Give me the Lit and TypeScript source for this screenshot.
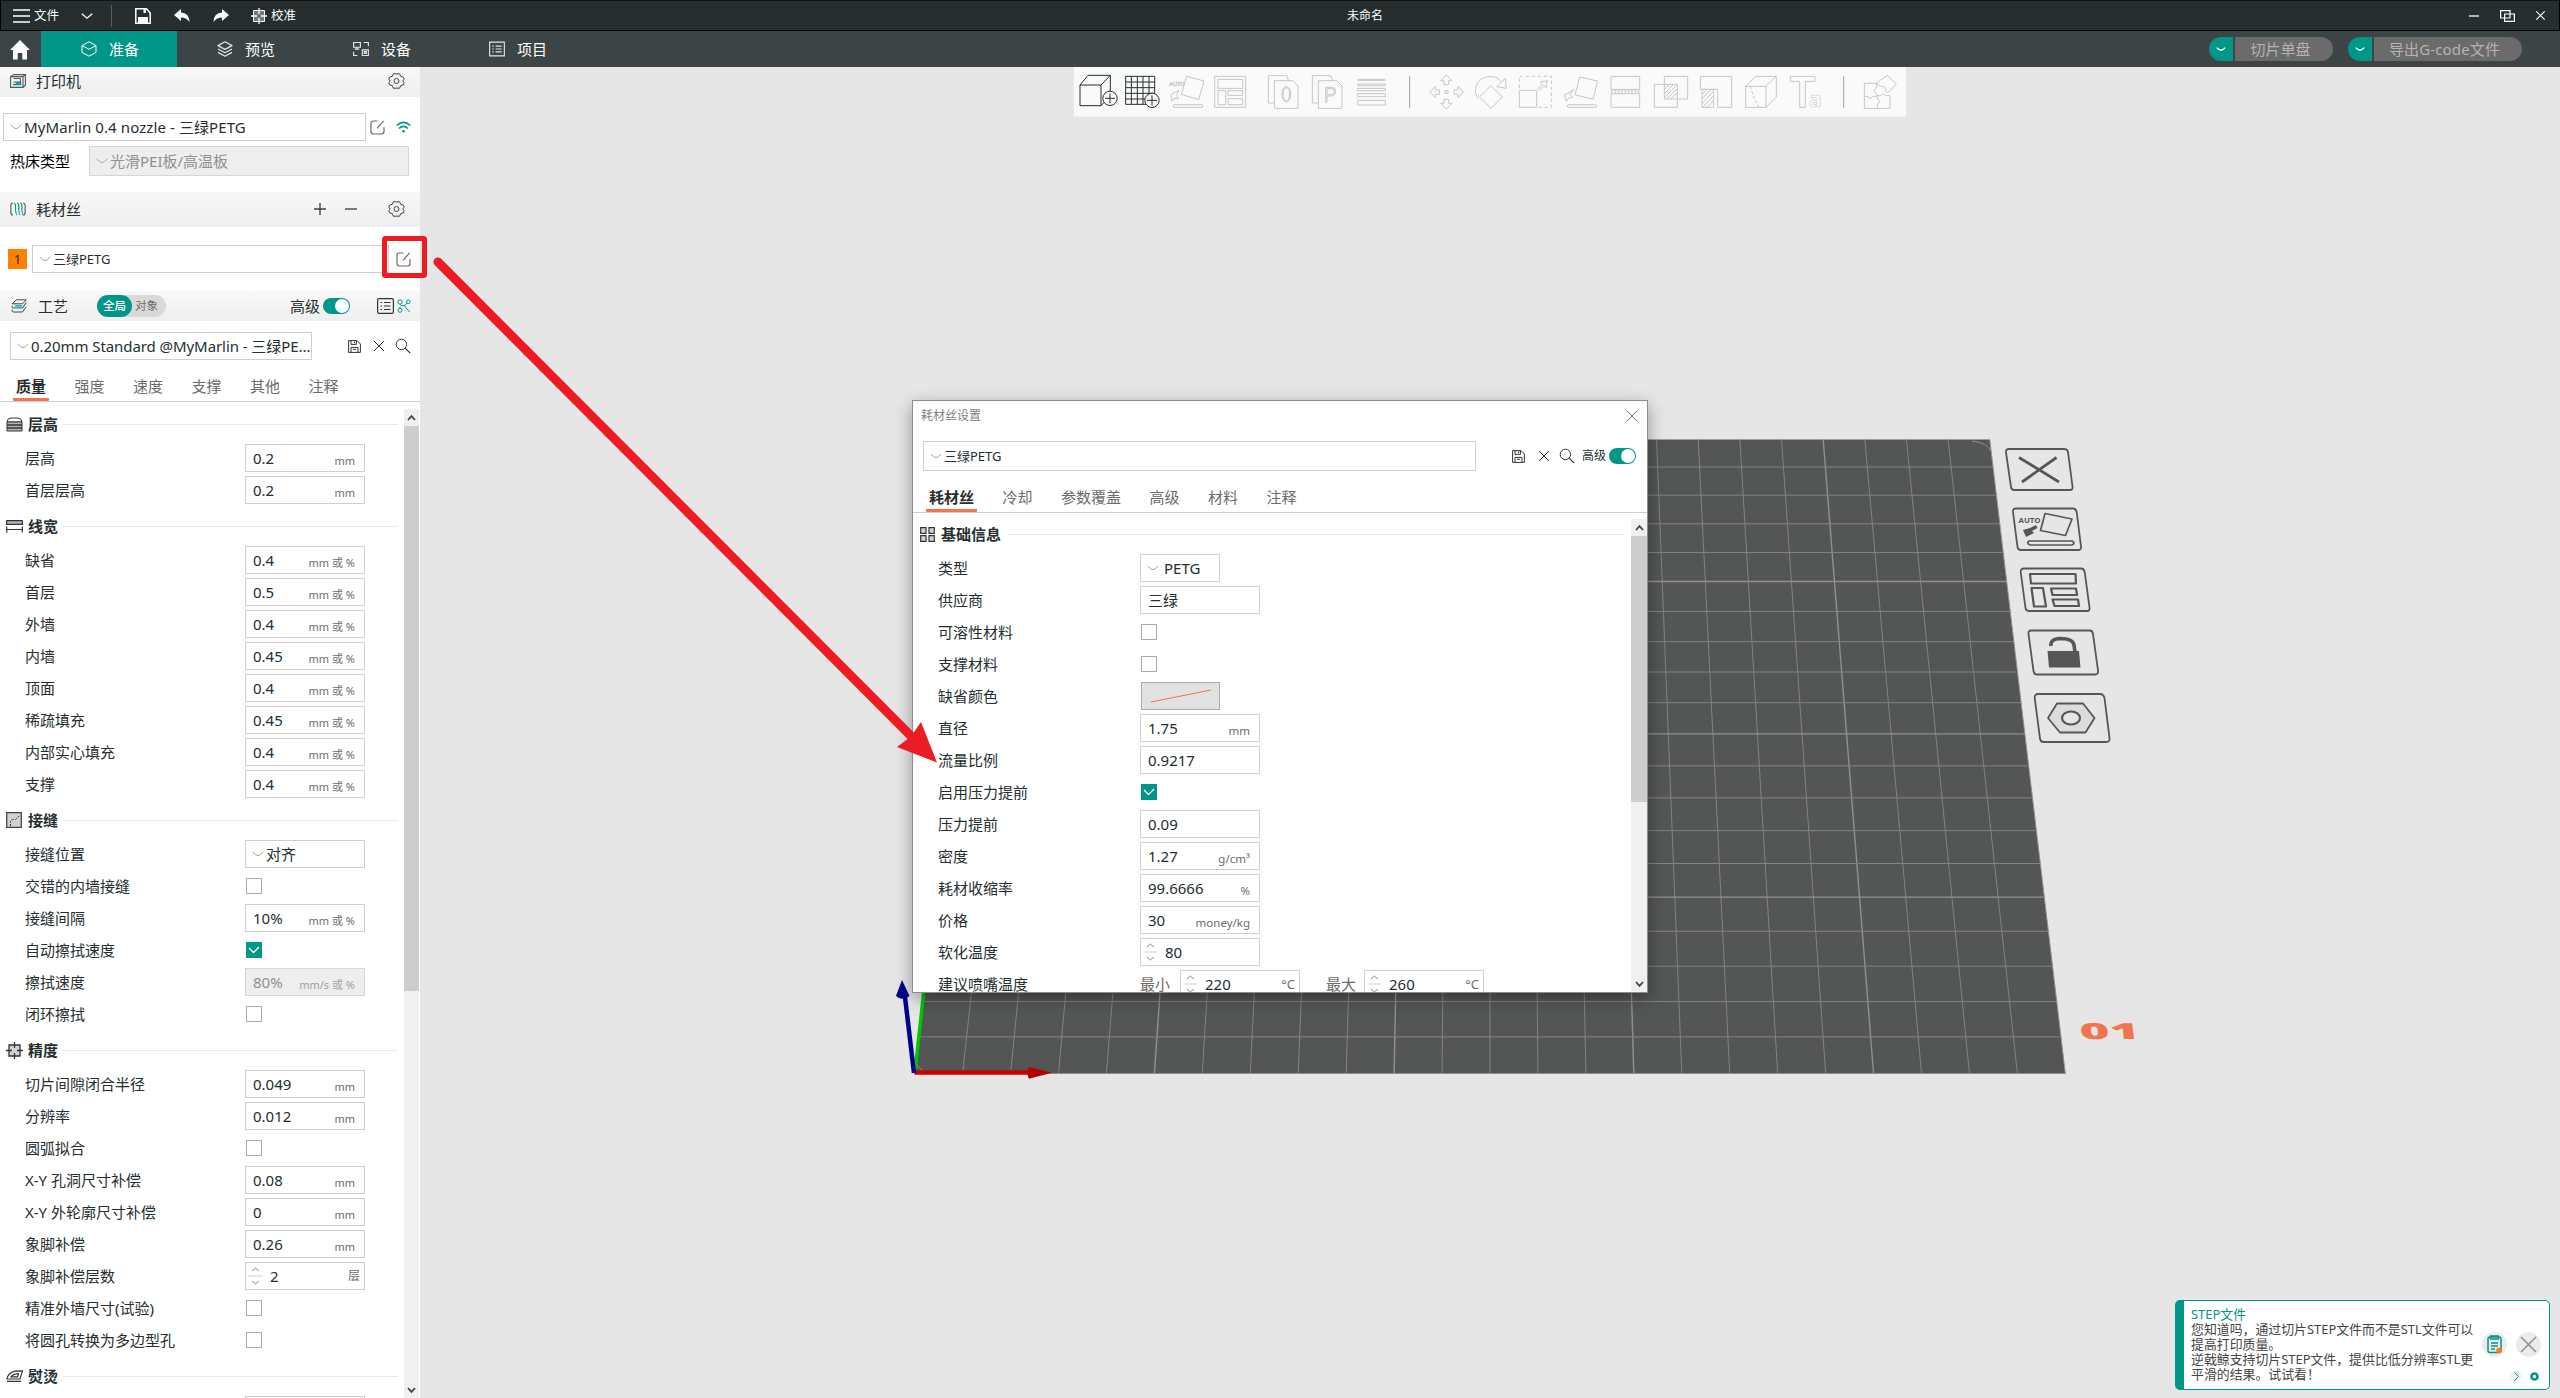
import { LitElement, html, css, svg, nothing, type TemplateResult } from "lit";
import { customElement } from "lit/decorators.js";
import { classMap } from "lit/directives/class-map.js";

type Kind = "text" | "select" | "check" | "spin" | "color" | "range";
interface Row {
  label: string;
  kind?: Kind;
  value?: string;
  unit?: string;
  on?: boolean;
  disabled?: boolean;
  short?: boolean;
}
interface Section {
  title: string;
  icon: string;
  rows: Row[];
}

const W = "mm 或 %";

const PROCESS: Section[] = [
  { title: "层高", icon: "layers", rows: [
    { label: "层高", value: "0.2", unit: "mm" },
    { label: "首层层高", value: "0.2", unit: "mm" },
  ] },
  { title: "线宽", icon: "width", rows: [
    { label: "缺省", value: "0.4", unit: W },
    { label: "首层", value: "0.5", unit: W },
    { label: "外墙", value: "0.4", unit: W },
    { label: "内墙", value: "0.45", unit: W },
    { label: "顶面", value: "0.4", unit: W },
    { label: "稀疏填充", value: "0.45", unit: W },
    { label: "内部实心填充", value: "0.4", unit: W },
    { label: "支撑", value: "0.4", unit: W },
  ] },
  { title: "接缝", icon: "seam", rows: [
    { label: "接缝位置", kind: "select", value: "对齐" },
    { label: "交错的内墙接缝", kind: "check" },
    { label: "接缝间隔", value: "10%", unit: W },
    { label: "自动擦拭速度", kind: "check", on: true },
    { label: "擦拭速度", value: "80%", unit: "mm/s 或 %", disabled: true },
    { label: "闭环擦拭", kind: "check" },
  ] },
  { title: "精度", icon: "target", rows: [
    { label: "切片间隙闭合半径", value: "0.049", unit: "mm" },
    { label: "分辨率", value: "0.012", unit: "mm" },
    { label: "圆弧拟合", kind: "check" },
    { label: "X-Y 孔洞尺寸补偿", value: "0.08", unit: "mm" },
    { label: "X-Y 外轮廓尺寸补偿", value: "0", unit: "mm" },
    { label: "象脚补偿", value: "0.26", unit: "mm" },
    { label: "象脚补偿层数", kind: "spin", value: "2", unit: "层" },
    { label: "精准外墙尺寸(试验)", kind: "check" },
    { label: "将圆孔转换为多边型孔", kind: "check" },
  ] },
  { title: "熨烫", icon: "iron", rows: [{ label: "", value: "", kind: "text" }] },
];

const FILAMENT: Section[] = [
  { title: "基础信息", icon: "grid", rows: [
    { label: "类型", kind: "select", value: "PETG", short: true },
    { label: "供应商", value: "三绿" },
    { label: "可溶性材料", kind: "check" },
    { label: "支撑材料", kind: "check" },
    { label: "缺省颜色", kind: "color" },
    { label: "直径", value: "1.75", unit: "mm" },
    { label: "流量比例", value: "0.9217" },
    { label: "启用压力提前", kind: "check", on: true },
    { label: "压力提前", value: "0.09" },
    { label: "密度", value: "1.27", unit: "g/cm³" },
    { label: "耗材收缩率", value: "99.6666", unit: "%" },
    { label: "价格", value: "30", unit: "money/kg" },
    { label: "软化温度", kind: "spin", value: "80" },
    { label: "建议喷嘴温度", kind: "range" },
  ] },
];

/* ---------- icons ---------- */
const ic = (w: number, h: number, body: unknown, cls = "", vb = `0 0 ${w} ${h}`) =>
  html`<svg class="ic ${cls}" width=${w} height=${h} viewBox=${vb}>${body}</svg>`;

const chevron = ic(12, 6, svg`<path d="M.8 .8 Q3.5 4.6 6 4.6 T11.2 .8" stroke="#a6a6a6"/>`, "chev");
const saveIcon = ic(13, 13, svg`<path d="M.6 .6H9L12.4 4V12.4H.6ZM3 .6V4.4H8.4V.6M3 12.4V7.4H10V12.4M4.8 9.3H8.2M6.6 1.5V3.2" stroke="#333"/>`);
const crossIcon = ic(12, 12, svg`<path d="M1 1L11 11M11 1L1 11" stroke="#333"/>`);
const searchIcon = ic(16, 16, svg`<circle cx="6.4" cy="6.4" r="5.2" stroke="#333"/><path d="M10.2 10.2L15.2 15.2" stroke="#333" stroke-width="1.2"/>`, "search");
const editIcon = ic(15, 15, svg`<path d="M7.5 1H3.2Q1 1 1 3.2V11.6Q1 14 3.2 14H11.6Q14 14 14 11.6V7.2M7.2 8.3L13.6 .8" stroke="#6b6b6b" stroke-width="1.2"/>`);
const gearIcon = ic(17, 16, svg`<path d="M5.3 .8H11.7L12.6 3.3L15.2 4L16.2 6.2L14.8 8L16.2 9.8L15.2 12L12.6 12.7L11.7 15.2H5.3L4.4 12.7L1.8 12L.8 9.8L2.2 8L.8 6.2L1.8 4L4.4 3.3Z" stroke="#444" stroke-linejoin="round"/><circle cx="8.5" cy="8" r="2.5" stroke="#444"/>`);

const sectionIcon = (n: string) => {
  switch (n) {
    case "layers":
      return ic(17, 15, svg`<path d="M1 5Q1.4 1 5 1H12Q15.6 1 16 5Z" fill="#fff" stroke="#333"/><path d="M1 5H16V8H1ZM1 8H16V11H1ZM1 11H16V14H1Z" fill="#b5b5b5" stroke="#333"/>`);
    case "width":
      return ic(17, 13, svg`<path d="M.7 .7H16.3V4.3H.7Z" fill="#b5b5b5" stroke="#333" stroke-width="1.2"/><path d="M.7 6.5V12.5M16.3 6.5V12.5M.7 9.5H16.3" stroke="#333" stroke-width="1.2"/>`);
    case "seam":
      return ic(16, 16, svg`<path d="M.7 .7H15.3V15.3H.7Z" fill="#d2d2d2" stroke="#444" stroke-width="1.3"/><path d="M4.5 14V9.5Q5 7.5 7.5 7.5H9.5L14 3" stroke="#333" stroke-dasharray="2 1.3"/>`);
    case "target":
      return ic(17, 17, svg`<path d="M3 3H14V14H3Z" fill="#d2d2d2" stroke="#333" stroke-width="1.3"/><path d="M8.5 0V6M8.5 11V17M0 8.5H6M11 8.5H17" stroke="#333" stroke-width="1.3"/>`);
    case "iron":
      return ic(17, 12, svg`<path d="M1 9Q2 3 9 1.2L16.5 .8L14 9Z" fill="#fff" stroke="#333" stroke-width="1.2"/><path d="M5 6.8Q6.5 4 12.5 3.6L11.6 6.8ZM1 11.3H15" stroke="#333" stroke-width="1.2"/>`);
    default:
      return ic(15, 15, svg`<path d="M.7 .7H6V6.3H.7ZM9 .7H14.3V6.3H9ZM.7 8.7H6V14.3H.7ZM9 8.7H14.3V14.3H9Z" fill="#d2d2d2" stroke="#333" stroke-width="1.2"/>`);
  }
};

/* Toolbar glyphs: [first unit, last unit, tone, drawing]; three units to a pixel. */
const plus = (x: number, y: number) => svg`<circle cx=${x} cy=${y} r="21.5" fill="#fafafa"/><path d=${`M${x - 15} ${y}H${x + 15}M${x} ${y - 15}V${y + 15}`}/>`;
const TOOLS: [number, number, string, unknown][] = [
  [12, 153, "dark", svg`<path d="M30 63L54 34H121L93 63ZM30 63V125H93V63M121 34V96L93 125"/>${plus(120, 103)}`],
  [153, 282, "dark", svg`<path d="M167 37H254V121H167ZM184 37V121M202 37V121M219 37V121M237 37V121M167 54H254M167 71H254M167 88H254M167 105H254"/>${plus(246, 109)}`],
  [282, 417, "dim", svg`<path d="M350 37L402 51L386 107L334 91ZM312 122H396Q402 126 396 130H312Q306 126 312 122ZM326 79L303 92L306 112L312 103L326 105L319 95Z"/><text x="298" y="66" font-size="17">AUTO</text>`],
  [417, 561, "dim", svg`<path d="M434 37H527V130H434ZM444 46H518V73H444ZM444 80H467V122H444ZM474 80H518V94H474ZM474 104H518V122H474Z"/>`],
  [561, 705, "dim", svg`<path d="M613 117H595V35H650L655 48M613 50H668L684 66V133H613Z"/><ellipse cx="649" cy="91" rx="13" ry="23"/><ellipse cx="649" cy="91" rx="10" ry="20"/>`],
  [705, 846, "dim", svg`<path d="M745 117H727V35H782L787 48M745 50H800L816 66V133H745ZM767 115V70H785Q797 70 797 82T785 96H771V115ZM771 74V92H784Q793 92 793 82T784 74Z"/>`],
  [846, 975, "dim", svg`<path d="M863 46H946M863 49H946M863 60H946V65H863ZM863 73H946V80H863ZM863 89H946V98H863ZM863 109H946V123H863Z"/>`],
  [975, 1065, "sep", svg`<path d="M1019 37V131"/>`],
  [-15, 120, "dim", svg`<path d="M49 33L66 50H56V62H42V50H32ZM49 135L32 118H42V106H56V118H66ZM-1 84L16 67V78H28V91H16V101ZM101 84L84 67V78H72V91H84V101ZM45 80H54V89H45Z"/>`],
  [120, 252, "dim", svg`<path d="M183 65L217 99L183 133L148 99ZM143 103Q132 86 138 67Q146 42 174 38Q200 35 212 52M200 68L226 43L229 73Z"/>`],
  [252, 390, "dim", svg`<path d="M268 79H320V130H268Z"/><path d="M268 72V37H364V130H326" stroke-dasharray="10 8"/><path d="M324 74L338 60L331 54L352 50L348 71L342 65L329 78Z"/>`],
  [390, 525, "dim", svg`<path d="M449 39L503 51L489 105L435 93ZM414 122H498Q504 126 498 130H414Q408 126 414 122ZM431 77L403 94L409 113L415 103L428 99L419 92Z"/>`],
  [525, 660, "dim", svg`<path d="M543 76V37H629V76ZM543 89H629V130H543Z"/><path d="M543 80H629M543 84H629" stroke-dasharray="6 4"/>`],
  [660, 795, "dim", svg`<path d="M673 61H742V130H673ZM703 37H773V105H703Z"/><path d="M705 75L717 63M705 87L729 63M705 99L740 64M710 104L741 75M722 104L741 87"/>`],
  [795, 930, "dim", svg`<path d="M811 76V37H905V130H863V76ZM816 76H851V130H816Z"/><path d="M817 90L829 77M817 104L841 77M817 118L850 82M820 128L850 96M833 129L850 110"/>`],
  [930, 1065, "dim", svg`<path d="M947 67L977 37H1039L1008 67ZM947 67V130H1008V67M1039 37V99L1008 130"/><path d="M961 67L972 102L986 130" stroke-dasharray="9 6"/>`],
  [1065, 1200, "dim", svg`<path d="M1081 37H1155V52H1126V130H1109V52H1081Z"/><text x="1137" y="129" font-size="64" font-weight="700">a</text>`],
  [1200, 1275, "sep", svg`<path d="M1241 37V131"/>`],
  [1275, 1428, "dim", svg`<path d="M1303 58H1340V72Q1326 80 1340 90V97H1328Q1319 108 1314 97H1303ZM1303 97V133H1342V121Q1356 113 1342 105V97M1342 133H1380V95H1366Q1360 84 1353 95H1342M1345 54L1352 48L1372 34L1399 61L1373 87L1366 80Q1368 65 1352 68L1343 60Q1334 66 1345 54"/>`],
];

/* ---------- build plate geometry ---------- */
const FAR = -3753, MID = 1490, NEAR = 1073, BACK = 439.5;
const along = (k: number, y: number) => MID + (k - 12) * 47.94 * ((y - FAR) / (NEAR - FAR));
const ROWS = [88, 155, 223, 291, 360, 431, 503, 575, 648, 722, 798, 874, 952, 1030, 1110, 1191, 1274, 1358, 1442].map((v) => 430 + v / 2.376);

const scene = svg`
  <polygon points=${`${along(0, BACK)},${BACK} ${along(24, BACK)},${BACK} ${along(24, NEAR)},${NEAR} ${along(0, NEAR)},${NEAR}`} fill="#545655"/>
  ${Array.from({ length: 23 }, (_, i) => i + 1).map((k) => svg`<line x1=${along(k, BACK)} y1=${BACK} x2=${along(k, NEAR)} y2=${NEAR} stroke=${k % 5 ? "#828483" : "#8f9190"} stroke-width=${k % 5 ? 1 : 1.4}/>`)}
  ${ROWS.map((y, i) => svg`<line x1=${along(0, y)} y1=${y} x2=${along(24, y)} y2=${y} stroke=${(i + 1) % 5 ? "#828483" : "#8f9190"} stroke-width=${(i + 1) % 5 ? 1 : 1.4}/>`)}
  <path d="M1972 441Q1988 443 1991 451M916 1062Q917 1068 926 1072M915 1073.5H2066" stroke="#8f908f" fill="none"/>
  <path d=${`M${along(24, BACK)} ${BACK}L${along(24, NEAR)} ${NEAR}`} stroke="#8f908f"/>
  <g fill="none" stroke="#555756" stroke-width="1.8" stroke-linejoin="round">
    <path d="M2009 449H2064Q2067.500 449 2068 452L2072.500 486.500Q2073 490 2070 490H2014.500Q2011.500 490 2011 487L2006 452.500Q2005.500 449 2009 449Z"/>
    <path d="M2016 508.500H2073Q2076 508.500 2076.700 512L2081 546.500Q2081.500 550 2078 550H2021Q2018 550 2017.500 547L2013 512Q2012.500 508.500 2016 508.500Z"/>
    <path d="M2024 568.500H2081Q2084 568.500 2084.700 572L2089.500 607.500Q2090 611 2087 611H2029Q2026 611 2025.500 608L2020.700 572Q2020.500 568.500 2024 568.500Z"/>
    <path d="M2031.500 630.500H2090Q2092.500 630.500 2093 634L2098 670.500Q2098.500 674.500 2095 674.500H2037Q2034 674.500 2033.500 671L2028.500 634Q2028 630.500 2031.500 630.500Z"/>
    <path d="M2038 694H2100Q2103.500 694 2104.500 698L2109.500 738Q2110 742 2106 742H2043.500Q2040.500 742 2040 738.500L2034.700 698Q2034.500 694 2038 694Z"/>
    <path d="M2019 457.500L2059 482M2056.500 457.500L2022 482" stroke-width="2.800"/>
    <path d="M2045 513.500L2072 519L2065.500 535.500L2040.500 530.500ZM2029 541H2072Q2076 543 2072 545H2030Q2026 543 2029 541Z" stroke-width="1.700"/>
    <path d="M2030 574H2075.500L2076 583.500H2031ZM2031.500 588H2043L2046 606.500H2034ZM2051 588.500H2076L2077 595H2052.500ZM2052.500 599.500H2078L2079 606H2054.500Z" stroke-width="2.200"/>
    <path d="M2051 646Q2050 639 2060 638.500Q2073 638.500 2074 645L2075 652" stroke-width="3.600"/>
    <path d="M2057 703.500H2083L2094.500 718L2085.500 732.500H2060L2048 718Z" fill="#dcdcdc"/>
    <ellipse cx="2071" cy="718" rx="9" ry="6.500" fill="#e6e6e6" stroke-width="2.200"/>
  </g>
  <path d="M2047.500 651H2079L2080.500 667.500H2049Z M2023 530L2030 528L2036 525L2037.500 528L2032 531L2034 533L2026 537Z" fill="#555756"/>
  <text class="auto" x="2018.500" y="522.500" font-size="7" textLength="22" lengthAdjust="spacingAndGlyphs">AUTO</text>
  <text class="plate" transform="translate(2080.500 1038.700) skewX(7) scale(2.330 1)" font-size="22">01</text>
  <path d="M915 1072L924.500 985" stroke="#00c800" stroke-width="3.500"/>
  <path d="M914.500 1072.500H1030" stroke="#c80000" stroke-width="4.500"/>
  <path d="M1029 1067Q1026 1073 1029 1078.700L1052 1072.800Z" fill="#b40000"/>
  <path d="M914 1073L905 997" stroke="#00008b" stroke-width="4.500"/>
  <path d="M902 980L896 996Q902 1002 909.500 996Z" fill="#00008b"/>`;

@customElement("app-root")
export class AppRoot extends LitElement {
  static styles = css`
    :host { display: block; width: 2560px; height: 1398px; position: relative; overflow: hidden;
      font: 15px/20px "Noto Sans", "Noto Sans CJK SC", sans-serif; color: #262e30; background: #e6e6e6; }
    * { box-sizing: border-box; }
    .ic { display: block; flex: none; fill: none; overflow: visible; }
    .grow { flex: 1; }
    .page { display: flex; flex-direction: column; height: 100%; }

    .titlebar { display: grid; grid-template-columns: 1fr auto 1fr; align-items: center; height: 31px; background: #262e30;
      border: 1px solid #000; border-top-color: #111; color: #fff; font-size: 12.500px; }
    .tl { display: flex; align-items: center; padding-left: 12px; }
    .tl > .vline { width: 1px; height: 22px; background: #566063; margin: 0 23px 0 18px; }
    .name { font-size: 12px; padding-left: 170px; }
    .tr { display: flex; align-items: center; justify-content: flex-end; padding-right: 14px; }

    .nav { display: flex; height: 36px; background: #3c4446; color: #fff; align-items: stretch; }
    .home { width: 41px; display: flex; align-items: center; padding: 2px 0 0 10px; }
    .navtab { width: 136px; display: flex; align-items: center; gap: 12px; padding: 0 0 0 40px; }
    .navtab .ic { width: 16px; }
    .navtab.on { background: #009688; }
    .split { display: flex; align-items: center; gap: 2px; margin-right: 15px; }
    .split .drop { width: 24px; height: 24px; border-radius: 12px 0 0 12px; background: #009688; display: grid; place-items: center; }
    .split .act { height: 24px; border-radius: 0 12px 12px 0; background: #6b6b6b; color: #b4b4b4; line-height: 24px; text-align: center; padding-right: 7px; }
    .act.a { width: 98px; }
    .act.b { width: 148px; letter-spacing: .15px; }
    .split.last { margin-right: 38px; }

    .body { display: flex; flex: 1; min-height: 0; }
    .side { width: 420px; background: #fff; display: flex; flex-direction: column; overflow: hidden; }
    .head { display: flex; align-items: center; background: linear-gradient(#f8f8f8, #efefef); padding: 0 15px 0 10px; flex: none; }
    .h1 { height: 30px; padding-bottom: 2px; }
    .h2 { height: 35px; padding-bottom: 1px; }
    .h3 { height: 30px; padding: 0 9px 0 11px; }
    .head .t { margin-left: 10px; }
    .box { display: flex; align-items: center; flex: none; border: 1px solid #cecece; background: #fff; height: 28px; padding: 0 6px; white-space: nowrap; overflow: hidden; }
    .box.off { background: #eee; color: #909090; border-color: #d6d6d6; }
    .box .chev { margin-right: 2px; }
    .printer { display: flex; align-items: center; padding: 16px 9px 5px 3px; }
    .printer .box { width: 363px; margin-right: 4px; letter-spacing: .1px; }
    .bed { display: flex; align-items: center; height: 30px; padding: 0 11px 0 10px; margin-bottom: 16px; color: #000; }
    .bed .box { width: 320px; height: 30px; margin-left: auto; }
    .fila { display: flex; align-items: center; padding: 18px 9px 18px 8px; font-size: 13px; }
    .fila .n { width: 20px; height: 20px; background: #ff8000; text-align: center; margin-right: 5px; color: #262e30; }
    .fila .box { width: 357px; margin-right: 7px; }
    .pill { display: flex; width: 69px; height: 22px; border-radius: 11px; background: #d9d9d9; font-size: 11.500px; line-height: 22px; color: #6b6b6b; margin-left: 29px; }
    .pill b { width: 35px; border-radius: 11px; background: #009688; color: #fff; text-align: center; margin-right: 3px; font-weight: 500; }
    .switch { width: 27px; height: 16px; flex: none; border-radius: 8px; background: #009688; display: flex; justify-content: flex-end; padding: 1px; margin-left: 3px; }
    .switch i { width: 14px; height: 14px; border-radius: 7px; background: #fff; }
    .tree { stroke: #009688; }
    .preset { display: flex; align-items: center; padding: 11px 9px 0 10px; }
    .preset .box { width: 302px; padding-right: 0; margin-right: 36px; letter-spacing: -.07px; }
    .preset > .ic + .ic { margin-left: 12px; }
    .preset > .ic + .search { margin-left: 10px; }
    .tabs { display: flex; height: 42px; border-bottom: 1px solid #cecece; padding: 0 0 0 13px; gap: 22.500px; flex: none; color: #6b6b6b; }
    .tab { padding: 16px 3px 0; height: 41px; }
    .tab.on { font-weight: 700; color: #262e30; border-bottom: 3px solid #f2754e; border-radius: 1px; }
    .scroll { display: flex; flex: 1; min-height: 0; overflow: hidden; }
    .list { flex: 1; min-width: 0; overflow: hidden; padding-top: 2px; }
    .bar { background: #f0f0f0; display: flex; flex-direction: column; flex: none; }
    .side .bar { width: 15px; margin: 7px 1px 0 0; }
    .cap { height: 17px; display: grid; place-items: center; }
    .thumb { background: #cdcdcd; }
    .side .thumb { height: 565px; }

    .sect { display: flex; align-items: center; height: 38px; padding: 2px 6px 0; gap: 5px; }
    .sect .si { width: 17px; flex: none; }
    .sect b { font-weight: 700; }
    .sect hr { flex: 1; border: 0; border-top: 1px solid #e8e8e8; margin: 0; }
    .row { display: flex; align-items: center; height: 32px; padding-left: 25px; white-space: nowrap; }
    .row .lab { width: 220px; flex: none; position: relative; top: -.5px; }
    .fld { width: 120px; padding: 0 9px 0 7px; }
    .fld.sel { padding-left: 6px; }
    .fld .u { margin-left: auto; font-size: 11px; color: #6b6b6b; position: relative; top: 2.500px; }
    .dialog .fld .u { font-size: 11.500px; }
    .fld.off .u { color: #a0a0a0; }
    .fld.spin { padding: 0 4px 0 2px; }
    .fld.spin .ic { margin-right: 7px; }
    .fld.spin .u { font-size: 12px; top: 0; }
    .dialog .fld.spin .u { font-size: 13px; }
    .fld.short { width: 80px; }
    .fld.short .chev { margin-right: 5px; }
    .check { width: 16px; height: 16px; border: 1px solid #ababab; margin-left: 1px; display: grid; place-items: center; }
    .check.on { background: #009688; border-color: #009688; }
    .color { width: 79px; height: 28px; border: 1px solid #ababab; background: #e1e1e1; margin-left: 1px; display: grid; place-items: center; }
    .mm { color: #6b6b6b; width: 40px; }
    .mm.two { margin-left: 26px; width: 38px; }

    .view { flex: 1; position: relative; overflow: hidden; background: #e6e6e6; }
    .scene { position: absolute; inset: 0; width: 2140px; height: 1331px; }
    .plate { fill: #f2754e; font-family: "Open Sans", sans-serif; font-weight: 800; }
    .auto { fill: #555756; font-family: "Open Sans", sans-serif; font-weight: 700; }
    .tools { position: absolute; left: 654px; top: 0; display: flex; background: #fafafa; height: 50px; border: solid #efefef; border-width: 0 0 1px; }
    .tools svg { stroke-width: 3; }
    .tools .dark { stroke: #262e30; }
    .tools .dim { stroke: #c6c6c6; }
    .tools .sep { stroke: #a0a0a0; }
    .tools text { font-family: "Noto Sans", sans-serif; stroke-width: 1.500; }

    .dialog { position: absolute; left: 492px; top: 333px; width: 736px; height: 593px; background: #fff; border: 1px solid #8c8c8c;
      box-shadow: 0 5px 16px rgba(0,0,0,.36); display: flex; flex-direction: column; overflow: hidden; }
    .dt { display: flex; align-items: center; justify-content: space-between; height: 30px; padding: 0 9px 0 8px; font-size: 12px; color: #808080; }
    .dp { display: flex; align-items: center; height: 30px; margin-top: 10px; padding: 0 10px; font-size: 13px; white-space: nowrap; }
    .dp .box { width: 553px; height: 30px; margin-right: 36px; }
    .dp > .ic + .ic { margin-left: 13px; }
    .dp > .ic + .search { margin-left: 9px; }
    .dp .adv { font-size: 12px; margin-left: 7px; }
    .dialog .tabs { padding-left: 13px; gap: 22.500px; }
    .dialog .list { padding-top: 1px; }
    .dialog .sect { padding-left: 7px; padding-right: 7px; gap: 4px; }
    .dialog .sect hr { margin-left: 4px; }
    .dialog .row .lab { width: 202px; }
    .dialog .bar { width: 16px; margin-top: 6px; }
    .dialog .thumb { height: 266px; }

    .toast { position: absolute; left: 1755px; top: 1233px; width: 375px; height: 90px; background: #fff; border: 1px solid #009688; border-left-width: 9px;
      border-radius: 5px; display: flex; font-size: 12.900px; line-height: 15px; padding: 6px 8px 0 7px; color: #444; }
    .toast p { margin: 0; width: 292px; white-space: nowrap; }
    .toast p span { display: block; }
    .toast .ttl { color: #009688; }
    .ta { display: flex; flex-direction: column; padding-top: 25px; gap: 15px; }
    .ta div { display: flex; align-items: center; gap: 9px; }
    .ta .sm { justify-content: flex-end; padding-right: 2px; }
    .mark { position: absolute; left: 0; top: 0; pointer-events: none; }
  `;

  private field(r: Row): TemplateResult {
    switch (r.kind) {
      case "check":
        return html`<div class=${classMap({ check: true, on: !!r.on })}>${r.on ? ic(12, 8, svg`<path d="M1 2L5.500 6.500L11 1" stroke="#fff" stroke-width="1.300"/>`) : nothing}</div>`;
      case "color":
        return html`<div class="color">${ic(60, 14, svg`<path d="M0 13L60 1" stroke="#f2754e"/>`)}</div>`;
      case "select":
        return html`<div class=${classMap({ box: true, fld: true, sel: true, short: !!r.short })}>${chevron}<span>${r.value}</span></div>`;
      case "spin":
        return this.spin(r.value ?? "", r.unit);
      case "range":
        return html`<span class="mm">最小</span>${this.spin("220", "°C")}<span class="mm two">最大</span>${this.spin("260", "°C")}`;
      default:
        return html`<div class=${classMap({ box: true, fld: true, off: !!r.disabled })}><span>${r.value}</span>${r.unit ? html`<span class="u">${r.unit}</span>` : nothing}</div>`;
    }
  }

  private spin(v: string, u?: string) {
    return html`<div class="box fld spin">${ic(15, 20, svg`<path d="M4 5L7.500 2L11 5M4 15L7.500 18L11 15" stroke="#8a8a8a"/><path d="M0 10H15" stroke="#d0d0d0"/>`)}<span>${v}</span>${u ? html`<span class="u">${u}</span>` : nothing}</div>`;
  }

  private sections(list: Section[]) {
    return list.map((s) => html`
      <div class="sect"><span class="si">${sectionIcon(s.icon)}</span><b>${s.title}</b><hr></div>
      ${s.rows.map((r) => html`<div class="row"><span class="lab">${r.label}</span>${this.field(r)}</div>`)}`);
  }

  private bar() {
    return html`<div class="bar">
      <div class="cap">${ic(9, 6, svg`<path d="M1 5L4.500 1.200L8 5" stroke="#444" stroke-width="1.800"/>`)}</div>
      <div class="thumb"></div><div class="grow"></div>
      <div class="cap">${ic(9, 6, svg`<path d="M1 1L4.500 4.800L8 1" stroke="#444" stroke-width="1.800"/>`)}</div>
    </div>`;
  }

  private tabs(names: string[]) {
    return html`<div class="tabs">${names.map((n, i) => html`<div class=${classMap({ tab: true, on: i === 0 })}>${n}</div>`)}</div>`;
  }

  private titlebar() {
    return html`<div class="titlebar">
      <div class="tl">
        ${ic(17, 14, svg`<path d="M0 1H17M0 7H17M0 13H17" stroke="#fff" stroke-width="1.300"/>`)}
        <span style="margin:0 22px 0 4px">文件</span>
        ${ic(12, 6, svg`<path d="M.8 .8L6 5.200L11.200 .8" stroke="#fff" stroke-width="1.300"/>`)}
        <span class="vline"></span>
        ${ic(16, 16, svg`<path d="M.8 .8H11.500L15.200 5V15.200H.8Z" stroke="#fff" stroke-width="1.500"/><path d="M3 9H13V15H3ZM8.500 1H11V5H8.500Z" fill="#fff"/>`)}
        <span style="width:23px"></span>
        ${ic(16, 14, svg`<path d="M0 6L7 0V3.600Q15 4 15.600 13Q12 8.600 7 8.600V12Z" fill="#fff"/>`)}
        <span style="width:23px"></span>
        ${ic(16, 14, svg`<path d="M16 6L9 0V3.600Q1 4 .4 13Q4 8.600 9 8.600V12Z" fill="#fff"/>`)}
        <span style="width:22px"></span>
        ${ic(16, 16, svg`<path d="M2.500 2.500H13.500V13.500H2.500Z" fill="#777" stroke="#fff"/><path d="M8 0V6M8 10V16M0 8H6M10 8H16" stroke="#fff" stroke-width="1.300"/>`)}
        <span style="margin-left:4px">校准</span>
      </div>
      <div class="name">未命名</div>
      <div class="tr">
        ${ic(10, 2, svg`<path d="M0 1H10" stroke="#fff" stroke-width="1.300"/>`)}
        <span style="width:21px"></span>
        ${ic(15, 12, svg`<path d="M.6 .6H10V8H.6ZM4.600 4H14.400V11.400H4.600Z" stroke="#fff" stroke-width="1.200"/>`)}
        <span style="width:21px"></span>
        ${ic(9, 9, svg`<path d="M.3 .3L8.700 8.700M8.700 .3L.3 8.700" stroke="#fff" stroke-width="1.200"/>`)}
      </div>
    </div>`;
  }

  private nav() {
    const drop = ic(10, 4, svg`<path d="M.8 .6Q3 3.200 5 3.200T9.200 .6" stroke="#fff" stroke-width="1.400"/>`);
    const s = "#e4e6e6";
    return html`<div class="nav">
      <div class="home">${ic(20, 20, svg`<path d="M10 0L20 10H17V19.500H12.300V13H7.700V19.500H3V10H0Z" fill="#fff"/>`)}</div>
      <div class="navtab on">${ic(16, 16, svg`<path d="M8 .8L15 4.600V11.400L8 15.200L1 11.400V4.600ZM1 4.600L8 8.300L15 4.600" stroke="#fff" stroke-linejoin="round"/>`)}准备</div>
      <div class="navtab">${ic(16, 16, svg`<path d="M8 .8L15 4.600L8 8.400L1 4.600ZM1 8L8 11.800L15 8M1 11.400L8 15.200L15 11.400" stroke=${s} stroke-width="1.200" stroke-linejoin="round"/>`)}预览</div>
      <div class="navtab">${ic(18, 16, svg`<path d="M.7 .7H8.300V6H.7ZM2 8.200H7M4.500 6V8M12 .7H17.300V5M.7 11V15.300H5M10.500 9H17.300V15.300H10.500ZM12.800 11H15V13H12.800Z" stroke=${s} stroke-width="1.300"/>`)}设备</div>
      <div class="navtab">${ic(17, 16, svg`<path d="M.7 .7H16.300V15.300H.7ZM3.500 5H5M7 5H13.500M3.500 8H5M7 8H13.500M3.500 11H5M7 11H13.500" stroke=${s} stroke-width="1.200"/>`)}项目</div>
      <div class="grow"></div>
      <div class="split"><span class="drop">${drop}</span><span class="act a">切片单盘</span></div>
      <div class="split last"><span class="drop">${drop}</span><span class="act b">导出G-code文件</span></div>
    </div>`;
  }

  private sidebar() {
    return html`<div class="side">
      <div class="head h1">
        ${ic(16, 14, svg`<path d="M3.500 .6H15.400V11L13 13.400H.6V2.600L3.500 .6M.6 2.600H13V13.400M13 2.600L15.400 .6" stroke="#555" stroke-width="1.100"/><path d="M3.500 4.500H10.500V8H3.500" stroke="#555"/><path d="M3 10.500H10.500V8.500L6 9" stroke="#009688" stroke-width="1.500"/>`)}
        <span class="t">打印机</span><span class="grow"></span>${gearIcon}
      </div>
      <div class="printer">
        <div class="box">${chevron}MyMarlin 0.4 nozzle - 三绿PETG</div>
        ${editIcon}<span class="grow"></span>
        ${ic(15, 12, svg`<path d="M.7 4.500Q7.500 -1.800 14.300 4.500M3 7.500Q7.500 3.300 12 7.500" stroke="#009688" stroke-width="1.500"/><circle cx="7.500" cy="10.300" r="1.300" fill="#009688"/>`)}
      </div>
      <div class="bed"><span>热床类型</span><div class="box off">${chevron}光滑PEI板/高温板</div></div>
      <div class="head h2">
        ${ic(16, 14, svg`<path d="M3 1Q0 1 1 7Q0 13 3 13M13 1Q16 1 15 7Q16 13 13 13" stroke="#555" stroke-width="1.100"/><path d="M3.800 1Q6 1 5.500 7Q6 13 7 13M7 1Q9.200 1 8.700 7Q9.200 13 10.200 13M10.200 1Q12.400 1 11.900 7Q12.400 13 13 13" stroke="#009688" stroke-width="1.100"/>`)}
        <span class="t">耗材丝</span><span class="grow"></span>
        ${ic(12, 12, svg`<path d="M6 0V12M0 6H12" stroke="#444" stroke-width="1.400"/>`)}
        <span style="width:19px"></span>
        ${ic(12, 12, svg`<path d="M0 6H12" stroke="#444" stroke-width="1.400"/>`)}
        <span style="width:31px"></span>${gearIcon}
      </div>
      <div class="fila"><span class="n">1</span><div class="box">${chevron}三绿PETG</div>${editIcon}</div>
      <div class="head h3">
        ${ic(16, 14, svg`<path d="M5.500 .8H15.300L11.500 4.800H1Z M15 8L11.500 13H2.500Q.5 13 1 10.500" stroke="#444" stroke-linejoin="round"/><path d="M15.300 3.500L11.500 8.800H2.500Q.8 8.800 1 6.800M4 6.800H11" stroke="#009688" stroke-width="1.200"/>`)}
        <span class="t" style="margin-left:11px">工艺</span>
        <span class="pill"><b>全局</b>对象</span>
        <span class="grow"></span>高级<span class="switch"><i></i></span>
        <span style="width:27px"></span>
        ${ic(17, 16, svg`<rect x=".6" y=".6" width="15.800" height="14.800" rx="1.500" stroke="#333" stroke-width="1.200"/><path d="M3.500 4.500H5M7 4.500H13.500M3.500 8H5M7 8H13.500M3.500 11.500H5M7 11.500H13.500" stroke="#333" stroke-width="1.200"/>`)}
        <span style="width:3px"></span>
        ${ic(14, 14, svg`<circle cx="3" cy="3" r="2.200"/><circle cx="11.300" cy="2.800" r="1.800"/><circle cx="3" cy="11.300" r="2"/><path d="M9.800 4.200L8 6.500H4.500L3 5.200M3 9.300V7.500M7 6.500L12.800 13"/>`, "tree")}
      </div>
      <div class="preset"><div class="box">${chevron}0.20mm Standard @MyMarlin - 三绿PE...</div>${saveIcon}${crossIcon}${searchIcon}</div>
      ${this.tabs(["质量", "强度", "速度", "支撑", "其他", "注释"])}
      <div class="scroll"><div class="list">${this.sections(PROCESS)}</div>${this.bar()}</div>
    </div>`;
  }

  private dialog() {
    return html`<div class="dialog">
      <div class="dt"><span>耗材丝设置</span>${ic(12, 12, svg`<path d="M.5 .5L11.500 11.500M11.500 .5L.5 11.500" stroke="#777"/>`)}</div>
      <div class="dp"><div class="box">${chevron}三绿PETG</div>${saveIcon}${crossIcon}${searchIcon}<span class="adv">高级</span><span class="switch"><i></i></span></div>
      ${this.tabs(["耗材丝", "冷却", "参数覆盖", "高级", "材料", "注释"])}
      <div class="scroll"><div class="list">${this.sections(FILAMENT)}</div>${this.bar()}</div>
    </div>`;
  }

  private toast() {
    return html`<div class="toast">
      <p><span class="ttl">STEP文件</span><span>您知道吗，通过切片STEP文件而不是STL文件可以</span><span>提高打印质量。</span><span>逆戟鲸支持切片STEP文件，提供比低分辨率STL更</span><span>平滑的结果。试试看！</span></p>
      <div class="ta">
        <div>
          ${ic(25, 25, svg`<circle cx="12.500" cy="12.500" r="12.500" fill="#ebebeb"/><rect x="6" y="5" width="13" height="15.500" rx="2" stroke="#009688" stroke-width="1.500"/><path d="M8.500 4H16.500V7H8.500ZM9 11H16M9 14H16M9 17H13" stroke="#009688" stroke-width="1.300"/><circle cx="17" cy="18.500" r="2.800" fill="#ff7a1a"/>`)}
          ${ic(25, 25, svg`<circle cx="12.500" cy="12.500" r="12.500" fill="#ebebeb"/><path d="M5 5L20 20M20 5L5 20" stroke="#8c8c8c" stroke-width="1.500"/>`)}
        </div>
        <div class="sm">
          ${ic(8, 9, svg`<circle cx="3" cy="4.500" r="6" fill="#f2f2f2"/><path d="M1.500 .3L5.500 4.500L1.500 8.700" stroke="#009688"/>`)}
          ${ic(9, 9, svg`<circle cx="4.500" cy="4.500" r="3" stroke="#009688" stroke-width="2.600"/>`)}
        </div>
      </div>
    </div>`;
  }

  render() {
    return html`<div class="page">
        ${this.titlebar()}${this.nav()}
        <div class="body">
          ${this.sidebar()}
          <div class="view">
            <svg class="scene" viewBox="420 67 2140 1331">${scene}</svg>
            <div class="tools">${TOOLS.map(([a, b, tone, g]) => ic((b - a) / 3, 49, g, tone, `${a} 9 ${b - a} 147`))}</div>
            ${this.dialog()}${this.toast()}
          </div>
        </div>
      </div>
      <svg class="mark" width="1000" height="800">
        <rect x="384.500" y="238.500" width="40" height="37" rx="1" fill="none" stroke="#ed1c24" stroke-width="5"/>
        <path d="M438 262L912 737" stroke="#ed1c24" stroke-width="9" stroke-linecap="round"/>
        <path d="M937 762.500L897 747L909 738L912 735L921 722Z" fill="#ed1c24"/>
      </svg>`;
  }
}
